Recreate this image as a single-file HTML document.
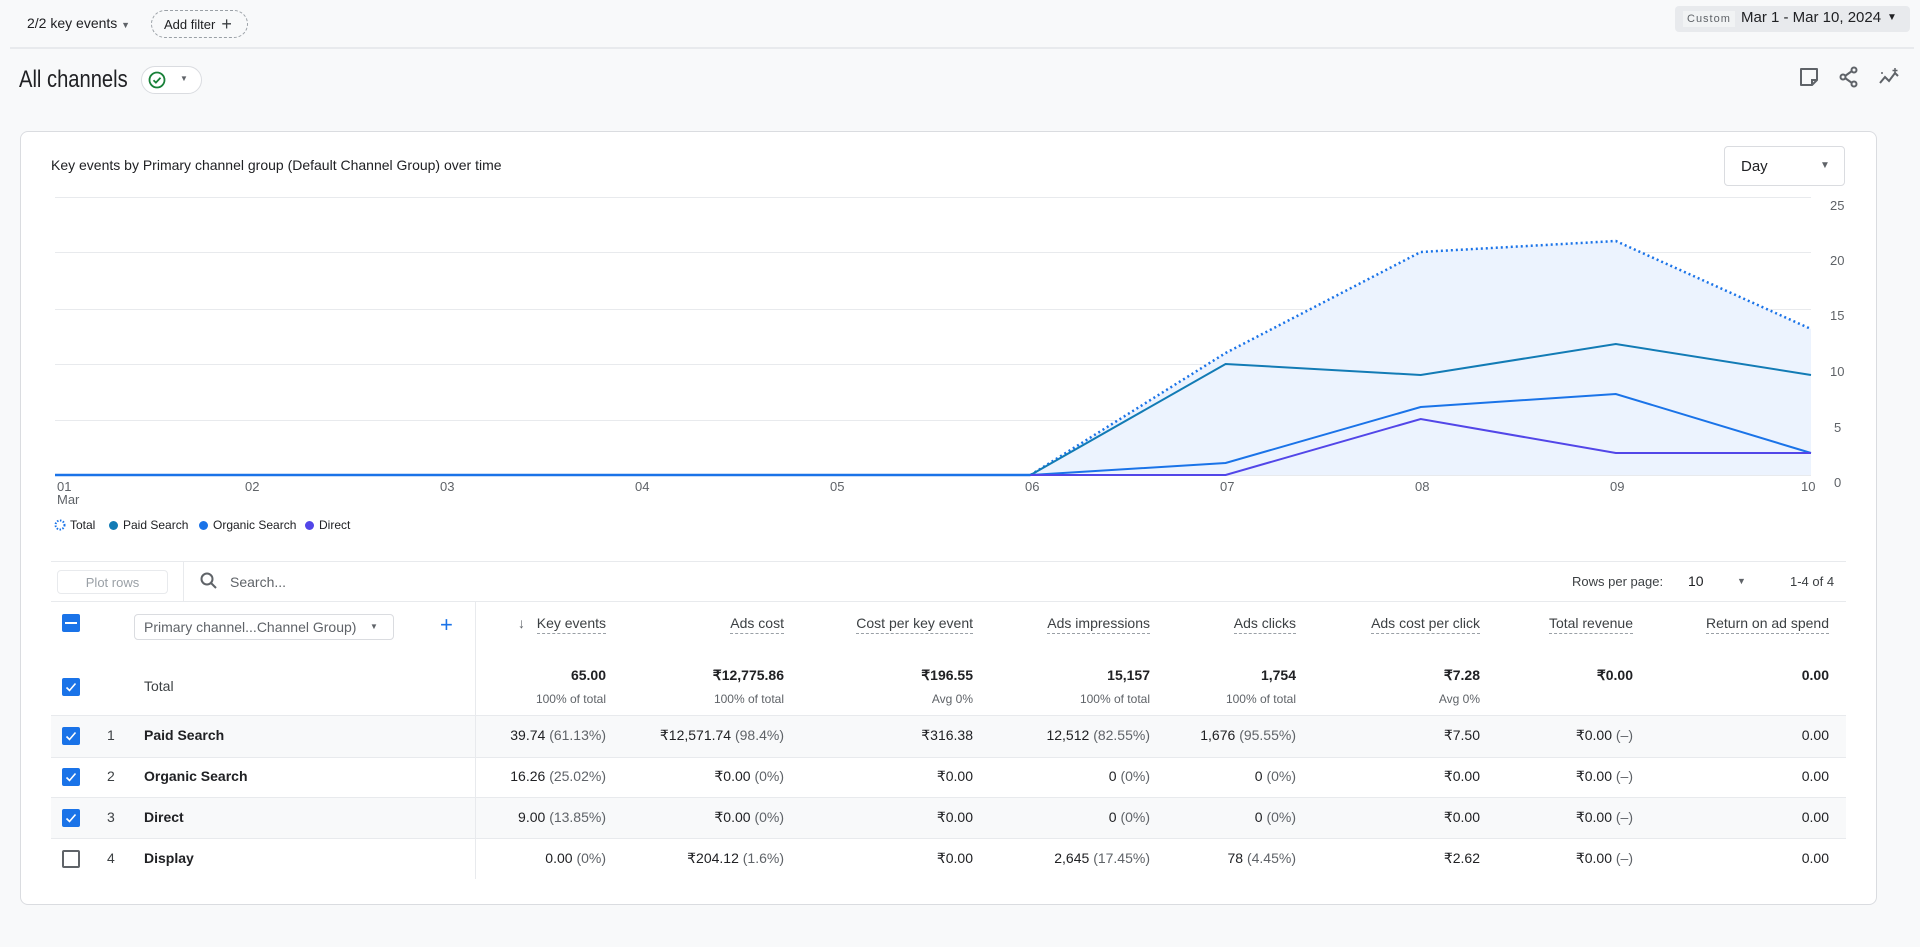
<!DOCTYPE html>
<html><head><meta charset="utf-8"><style>
*{box-sizing:border-box;margin:0;padding:0}
body{width:1920px;height:947px;background:#f8f9fa;font-family:"Liberation Sans",Arial,sans-serif;color:#202124;position:relative;overflow:hidden}
.a{position:absolute;white-space:nowrap}
.r{text-align:right}
.hd{font-size:14px;color:#3c4043;border-bottom:1px dashed #9aa0a6;padding-bottom:2px}
.num{font-size:14px;color:#202124}
.g{color:#5f6368}
.sub{font-size:12px;color:#5f6368}
.cb{position:absolute;width:18px;height:18px;border-radius:2px;background:#1a73e8}
.cb.off{background:#fff;border:2px solid #5f6368}
</style></head><body>
<!-- top bar -->
<div class="a" style="left:27px;top:15px;font-size:14px">2/2 key events <span style="font-size:9px;color:#5f6368">▼</span></div>
<div class="a" style="left:151px;top:10px;width:97px;height:28px;border:1px dashed #9aa0a6;border-radius:14px;font-size:13px;display:flex;align-items:center;padding-left:12px;gap:6px">Add filter <span style="font-size:18px;color:#3c4043;line-height:18px">+</span></div>
<div class="a" style="left:1675px;top:6px;width:235px;height:26px;background:#e8eaed;border-radius:4px"></div>
<div class="a" style="left:1683px;top:11px;background:#f1f3f4;padding:2px 4px;font-size:11px;letter-spacing:1px;color:#5f6368">Custom</div>
<div class="a" style="left:1741px;top:9px;font-size:15px;color:#202124">Mar 1 - Mar 10, 2024</div>
<div class="a" style="left:1887px;top:12px;font-size:10px">▼</div>
<div class="a" style="left:10px;top:47px;width:1904px;height:2px;background:#e8eaed"></div>
<!-- title -->
<div class="a" style="left:19px;top:66px;font-size:24px;color:#202124;transform:scaleX(0.84);transform-origin:left">All channels</div>
<div class="a" style="left:141px;top:66px;width:61px;height:28px;border:1px solid #dadce0;border-radius:14px;background:#fff"></div>
<svg class="a" style="left:148px;top:71px" width="18" height="18" viewBox="0 0 18 18"><circle cx="9" cy="9" r="7.5" fill="none" stroke="#188038" stroke-width="1.8"/><path d="M5.5 9.2l2.4 2.4 4.6-4.8" fill="none" stroke="#188038" stroke-width="1.8"/></svg>
<div class="a" style="left:180px;top:74px;font-size:8px;color:#5f6368">▼</div>
<svg class="a" style="left:1798px;top:66px" width="110" height="22" viewBox="0 0 110 22">
<path d="M3 3h16v11l-5 5H3z" fill="none" stroke="#5f6368" stroke-width="2" stroke-linejoin="round"/><path d="M14 19v-5h5" fill="none" stroke="#5f6368" stroke-width="2"/>
<circle cx="56" cy="4" r="2.5" fill="none" stroke="#5f6368" stroke-width="2"/><circle cx="45" cy="11" r="2.5" fill="none" stroke="#5f6368" stroke-width="2"/><circle cx="56" cy="18" r="2.5" fill="none" stroke="#5f6368" stroke-width="2"/><path d="M47 10l7-5M47 12l7 5" stroke="#5f6368" stroke-width="2"/>
<path d="M82 17l5-6 4 4 6-8 3 3" fill="none" stroke="#5f6368" stroke-width="2"/><path d="M97 2v5M94.5 4.5h5" stroke="#5f6368" stroke-width="1.5"/><circle cx="84" cy="7" r="1" fill="#5f6368"/>
</svg>
<!-- card -->
<div class="a" style="left:20px;top:131px;width:1857px;height:774px;background:#fff;border:1px solid #dadce0;border-radius:8px"></div>
<div class="a" style="left:51px;top:157px;font-size:14px;color:#202124">Key events by Primary channel group (Default Channel Group) over time</div>
<div class="a" style="left:1724px;top:146px;width:121px;height:40px;border:1px solid #dadce0;border-radius:4px;font-size:15px;padding:11px 0 0 16px">Day<span style="position:absolute;left:95px;top:13px;font-size:10px;color:#5f6368">▼</span></div>
<!-- chart -->
<svg class="a" style="left:0;top:0" width="1920" height="540">
<g stroke="#e8eaed" stroke-width="1"><path d="M55 197.5H1811M55 252.5H1811M55 309.5H1811M55 364.5H1811M55 420.5H1811M55 475.5H1811"/></g>
<path d="M1030.5 475L1225.6 353L1420.7 252L1615.8 241L1811 329L1811 475Z" fill="#ecf3fe"/>
<path d="M55 475H1030.5" stroke="#1a73e8" stroke-width="2.5"/>
<path d="M1030.5 475L1225.6 353L1420.7 252L1615.8 241L1811 329" fill="none" stroke="#1a73e8" stroke-width="2.5" stroke-dasharray="2 3"/>
<path d="M1030.5 475L1225.6 364L1420.7 375L1615.8 344L1811 375" fill="none" stroke="#127bb5" stroke-width="2"/>
<path d="M1030.5 475L1225.6 463L1420.7 407L1615.8 394L1811 453" fill="none" stroke="#1a73e8" stroke-width="2"/>
<path d="M1030.5 475L1225.6 475L1420.7 419L1615.8 453L1811 453" fill="none" stroke="#5246e8" stroke-width="2"/>
<g font-family="Liberation Sans,Arial,sans-serif" font-size="13" fill="#5f6368">
<text x="1830" y="210">25</text><text x="1830" y="265">20</text><text x="1830" y="320">15</text><text x="1830" y="376">10</text><text x="1834" y="432">5</text><text x="1834" y="487">0</text>
<text x="57" y="491">01</text><text x="57" y="504">Mar</text>
<text x="245" y="491">02</text><text x="440" y="491">03</text><text x="635" y="491">04</text><text x="830" y="491">05</text><text x="1025" y="491">06</text><text x="1220" y="491">07</text><text x="1415" y="491">08</text><text x="1610" y="491">09</text><text x="1801" y="491">10</text>
</g>
</svg>
<svg class="a" style="left:54px;top:519px" width="12" height="12"><circle cx="6" cy="6" r="4.5" fill="none" stroke="#1a73e8" stroke-width="2" stroke-dasharray="1.5 1.5"/></svg>
<div class="a" style="left:70px;top:518px;font-size:12px">Total</div>
<div class="a" style="left:109px;top:521px;width:9px;height:9px;border-radius:50%;background:#127bb5"></div>
<div class="a" style="left:123px;top:518px;font-size:12px">Paid Search</div>
<div class="a" style="left:199px;top:521px;width:9px;height:9px;border-radius:50%;background:#1a73e8"></div>
<div class="a" style="left:213px;top:518px;font-size:12px">Organic Search</div>
<div class="a" style="left:305px;top:521px;width:9px;height:9px;border-radius:50%;background:#5246e8"></div>
<div class="a" style="left:319px;top:518px;font-size:12px">Direct</div>
<!-- table toolbar -->
<div class="a" style="left:51px;top:561px;width:1795px;height:1px;background:#e8eaed"></div>
<div class="a" style="left:57px;top:570px;width:111px;height:24px;border:1px solid #e8eaed;border-radius:4px;font-size:13px;color:#9aa0a6;text-align:center;padding-top:4px">Plot rows</div>
<div class="a" style="left:183px;top:562px;width:1px;height:39px;background:#e8eaed"></div>
<svg class="a" style="left:200px;top:572px" width="18" height="18"><circle cx="7" cy="7" r="5.5" fill="none" stroke="#5f6368" stroke-width="2"/><path d="M11 11l5 5" stroke="#5f6368" stroke-width="2"/></svg>
<div class="a" style="left:230px;top:574px;font-size:14px;color:#5f6368">Search...</div>
<div class="a" style="left:1572px;top:574px;font-size:13px;color:#3c4043">Rows per page:</div>
<div class="a" style="left:1688px;top:573px;font-size:14px">10</div>
<div class="a" style="left:1737px;top:576px;font-size:9px;color:#5f6368">▼</div>
<div class="a" style="left:1790px;top:574px;font-size:13px;color:#3c4043">1-4 of 4</div>
<div class="a" style="left:51px;top:601px;width:1795px;height:1px;background:#e8eaed"></div>
<!-- header -->
<div class="cb" style="left:62px;top:614px"><div style="position:absolute;left:3px;top:8px;width:12px;height:2px;background:#fff"></div></div>
<div class="a" style="left:134px;top:614px;width:260px;height:26px;border:1px solid #dadce0;border-radius:4px;font-size:14px;color:#5f6368;padding:4px 0 0 9px">Primary channel...Channel Group)<span style="position:absolute;left:235px;top:7px;font-size:8px">▼</span></div>
<div class="a" style="left:440px;top:612px;font-size:22px;color:#1a73e8">+</div>
<div class="a" style="left:475px;top:602px;width:1px;height:277px;background:#e8eaed"></div>
<div class="a" style="left:518px;top:615px;font-size:14px;color:#5f6368">↓</div>
<div class="a r hd" style="right:1314px;top:615px">Key events</div>
<div class="a r hd" style="right:1136px;top:615px">Ads cost</div>
<div class="a r hd" style="right:947px;top:615px">Cost per key event</div>
<div class="a r hd" style="right:770px;top:615px">Ads impressions</div>
<div class="a r hd" style="right:624px;top:615px">Ads clicks</div>
<div class="a r hd" style="right:440px;top:615px">Ads cost per click</div>
<div class="a r hd" style="right:287px;top:615px">Total revenue</div>
<div class="a r hd" style="right:91px;top:615px">Return on ad spend</div>
<!-- total -->
<div class="cb" style="left:62px;top:678px"><svg width="18" height="18" style="position:absolute;left:0;top:0"><path d="M4.5 9.5l3 3 6-7" fill="none" stroke="#fff" stroke-width="1.6"/></svg></div>
<div class="a" style="left:144px;top:678px;font-size:14px;color:#3c4043">Total</div>
<div class="a r num" style="right:1314px;top:667px;font-weight:bold">65.00</div><div class="a r sub" style="right:1314px;top:692px">100% of total</div>
<div class="a r num" style="right:1136px;top:667px;font-weight:bold">₹12,775.86</div><div class="a r sub" style="right:1136px;top:692px">100% of total</div>
<div class="a r num" style="right:947px;top:667px;font-weight:bold">₹196.55</div><div class="a r sub" style="right:947px;top:692px">Avg 0%</div>
<div class="a r num" style="right:770px;top:667px;font-weight:bold">15,157</div><div class="a r sub" style="right:770px;top:692px">100% of total</div>
<div class="a r num" style="right:624px;top:667px;font-weight:bold">1,754</div><div class="a r sub" style="right:624px;top:692px">100% of total</div>
<div class="a r num" style="right:440px;top:667px;font-weight:bold">₹7.28</div><div class="a r sub" style="right:440px;top:692px">Avg 0%</div>
<div class="a r num" style="right:287px;top:667px;font-weight:bold">₹0.00</div>
<div class="a r num" style="right:91px;top:667px;font-weight:bold">0.00</div>
<!-- rows -->
<div class="a" style="left:51px;top:715px;width:1795px;height:42px;background:#f8f9fa;border-top:1px solid #e8eaed"></div>
<div class="a" style="left:51px;top:797px;width:1795px;height:1px;background:#e8eaed"></div>
<div class="a" style="left:51px;top:798px;width:1795px;height:41px;background:#f8f9fa;border-bottom:1px solid #e8eaed"></div>
<div class="a" style="left:51px;top:757px;width:1795px;height:1px;background:#e8eaed"></div>
<div class="a" style="left:475px;top:715px;width:1px;height:164px;background:#e8eaed"></div>

<div class="cb" style="left:62px;top:727px"><svg width="18" height="18" style="position:absolute"><path d="M4.5 9.5l3 3 6-7" fill="none" stroke="#fff" stroke-width="1.6"/></svg></div>
<div class="a num" style="left:107px;top:727px;color:#3c4043">1</div><div class="a num" style="left:144px;top:727px;font-weight:bold">Paid Search</div>
<div class="cb" style="left:62px;top:768px"><svg width="18" height="18" style="position:absolute"><path d="M4.5 9.5l3 3 6-7" fill="none" stroke="#fff" stroke-width="1.6"/></svg></div>
<div class="a num" style="left:107px;top:768px;color:#3c4043">2</div><div class="a num" style="left:144px;top:768px;font-weight:bold">Organic Search</div>
<div class="cb" style="left:62px;top:809px"><svg width="18" height="18" style="position:absolute"><path d="M4.5 9.5l3 3 6-7" fill="none" stroke="#fff" stroke-width="1.6"/></svg></div>
<div class="a num" style="left:107px;top:809px;color:#3c4043">3</div><div class="a num" style="left:144px;top:809px;font-weight:bold">Direct</div>
<div class="cb off" style="left:62px;top:850px"></div>
<div class="a num" style="left:107px;top:850px;color:#3c4043">4</div><div class="a num" style="left:144px;top:850px;font-weight:bold">Display</div>

<!-- row 1 -->
<div class="a r num" style="right:1314px;top:727px">39.74 <span class="g">(61.13%)</span></div>
<div class="a r num" style="right:1136px;top:727px">₹12,571.74 <span class="g">(98.4%)</span></div>
<div class="a r num" style="right:947px;top:727px">₹316.38</div>
<div class="a r num" style="right:770px;top:727px">12,512 <span class="g">(82.55%)</span></div>
<div class="a r num" style="right:624px;top:727px">1,676 <span class="g">(95.55%)</span></div>
<div class="a r num" style="right:440px;top:727px">₹7.50</div>
<div class="a r num" style="right:287px;top:727px">₹0.00 <span class="g">(–)</span></div>
<div class="a r num" style="right:91px;top:727px">0.00</div>
<!-- row 2 -->
<div class="a r num" style="right:1314px;top:768px">16.26 <span class="g">(25.02%)</span></div>
<div class="a r num" style="right:1136px;top:768px">₹0.00 <span class="g">(0%)</span></div>
<div class="a r num" style="right:947px;top:768px">₹0.00</div>
<div class="a r num" style="right:770px;top:768px">0 <span class="g">(0%)</span></div>
<div class="a r num" style="right:624px;top:768px">0 <span class="g">(0%)</span></div>
<div class="a r num" style="right:440px;top:768px">₹0.00</div>
<div class="a r num" style="right:287px;top:768px">₹0.00 <span class="g">(–)</span></div>
<div class="a r num" style="right:91px;top:768px">0.00</div>
<!-- row 3 -->
<div class="a r num" style="right:1314px;top:809px">9.00 <span class="g">(13.85%)</span></div>
<div class="a r num" style="right:1136px;top:809px">₹0.00 <span class="g">(0%)</span></div>
<div class="a r num" style="right:947px;top:809px">₹0.00</div>
<div class="a r num" style="right:770px;top:809px">0 <span class="g">(0%)</span></div>
<div class="a r num" style="right:624px;top:809px">0 <span class="g">(0%)</span></div>
<div class="a r num" style="right:440px;top:809px">₹0.00</div>
<div class="a r num" style="right:287px;top:809px">₹0.00 <span class="g">(–)</span></div>
<div class="a r num" style="right:91px;top:809px">0.00</div>
<!-- row 4 -->
<div class="a r num" style="right:1314px;top:850px">0.00 <span class="g">(0%)</span></div>
<div class="a r num" style="right:1136px;top:850px">₹204.12 <span class="g">(1.6%)</span></div>
<div class="a r num" style="right:947px;top:850px">₹0.00</div>
<div class="a r num" style="right:770px;top:850px">2,645 <span class="g">(17.45%)</span></div>
<div class="a r num" style="right:624px;top:850px">78 <span class="g">(4.45%)</span></div>
<div class="a r num" style="right:440px;top:850px">₹2.62</div>
<div class="a r num" style="right:287px;top:850px">₹0.00 <span class="g">(–)</span></div>
<div class="a r num" style="right:91px;top:850px">0.00</div>
</body></html>
